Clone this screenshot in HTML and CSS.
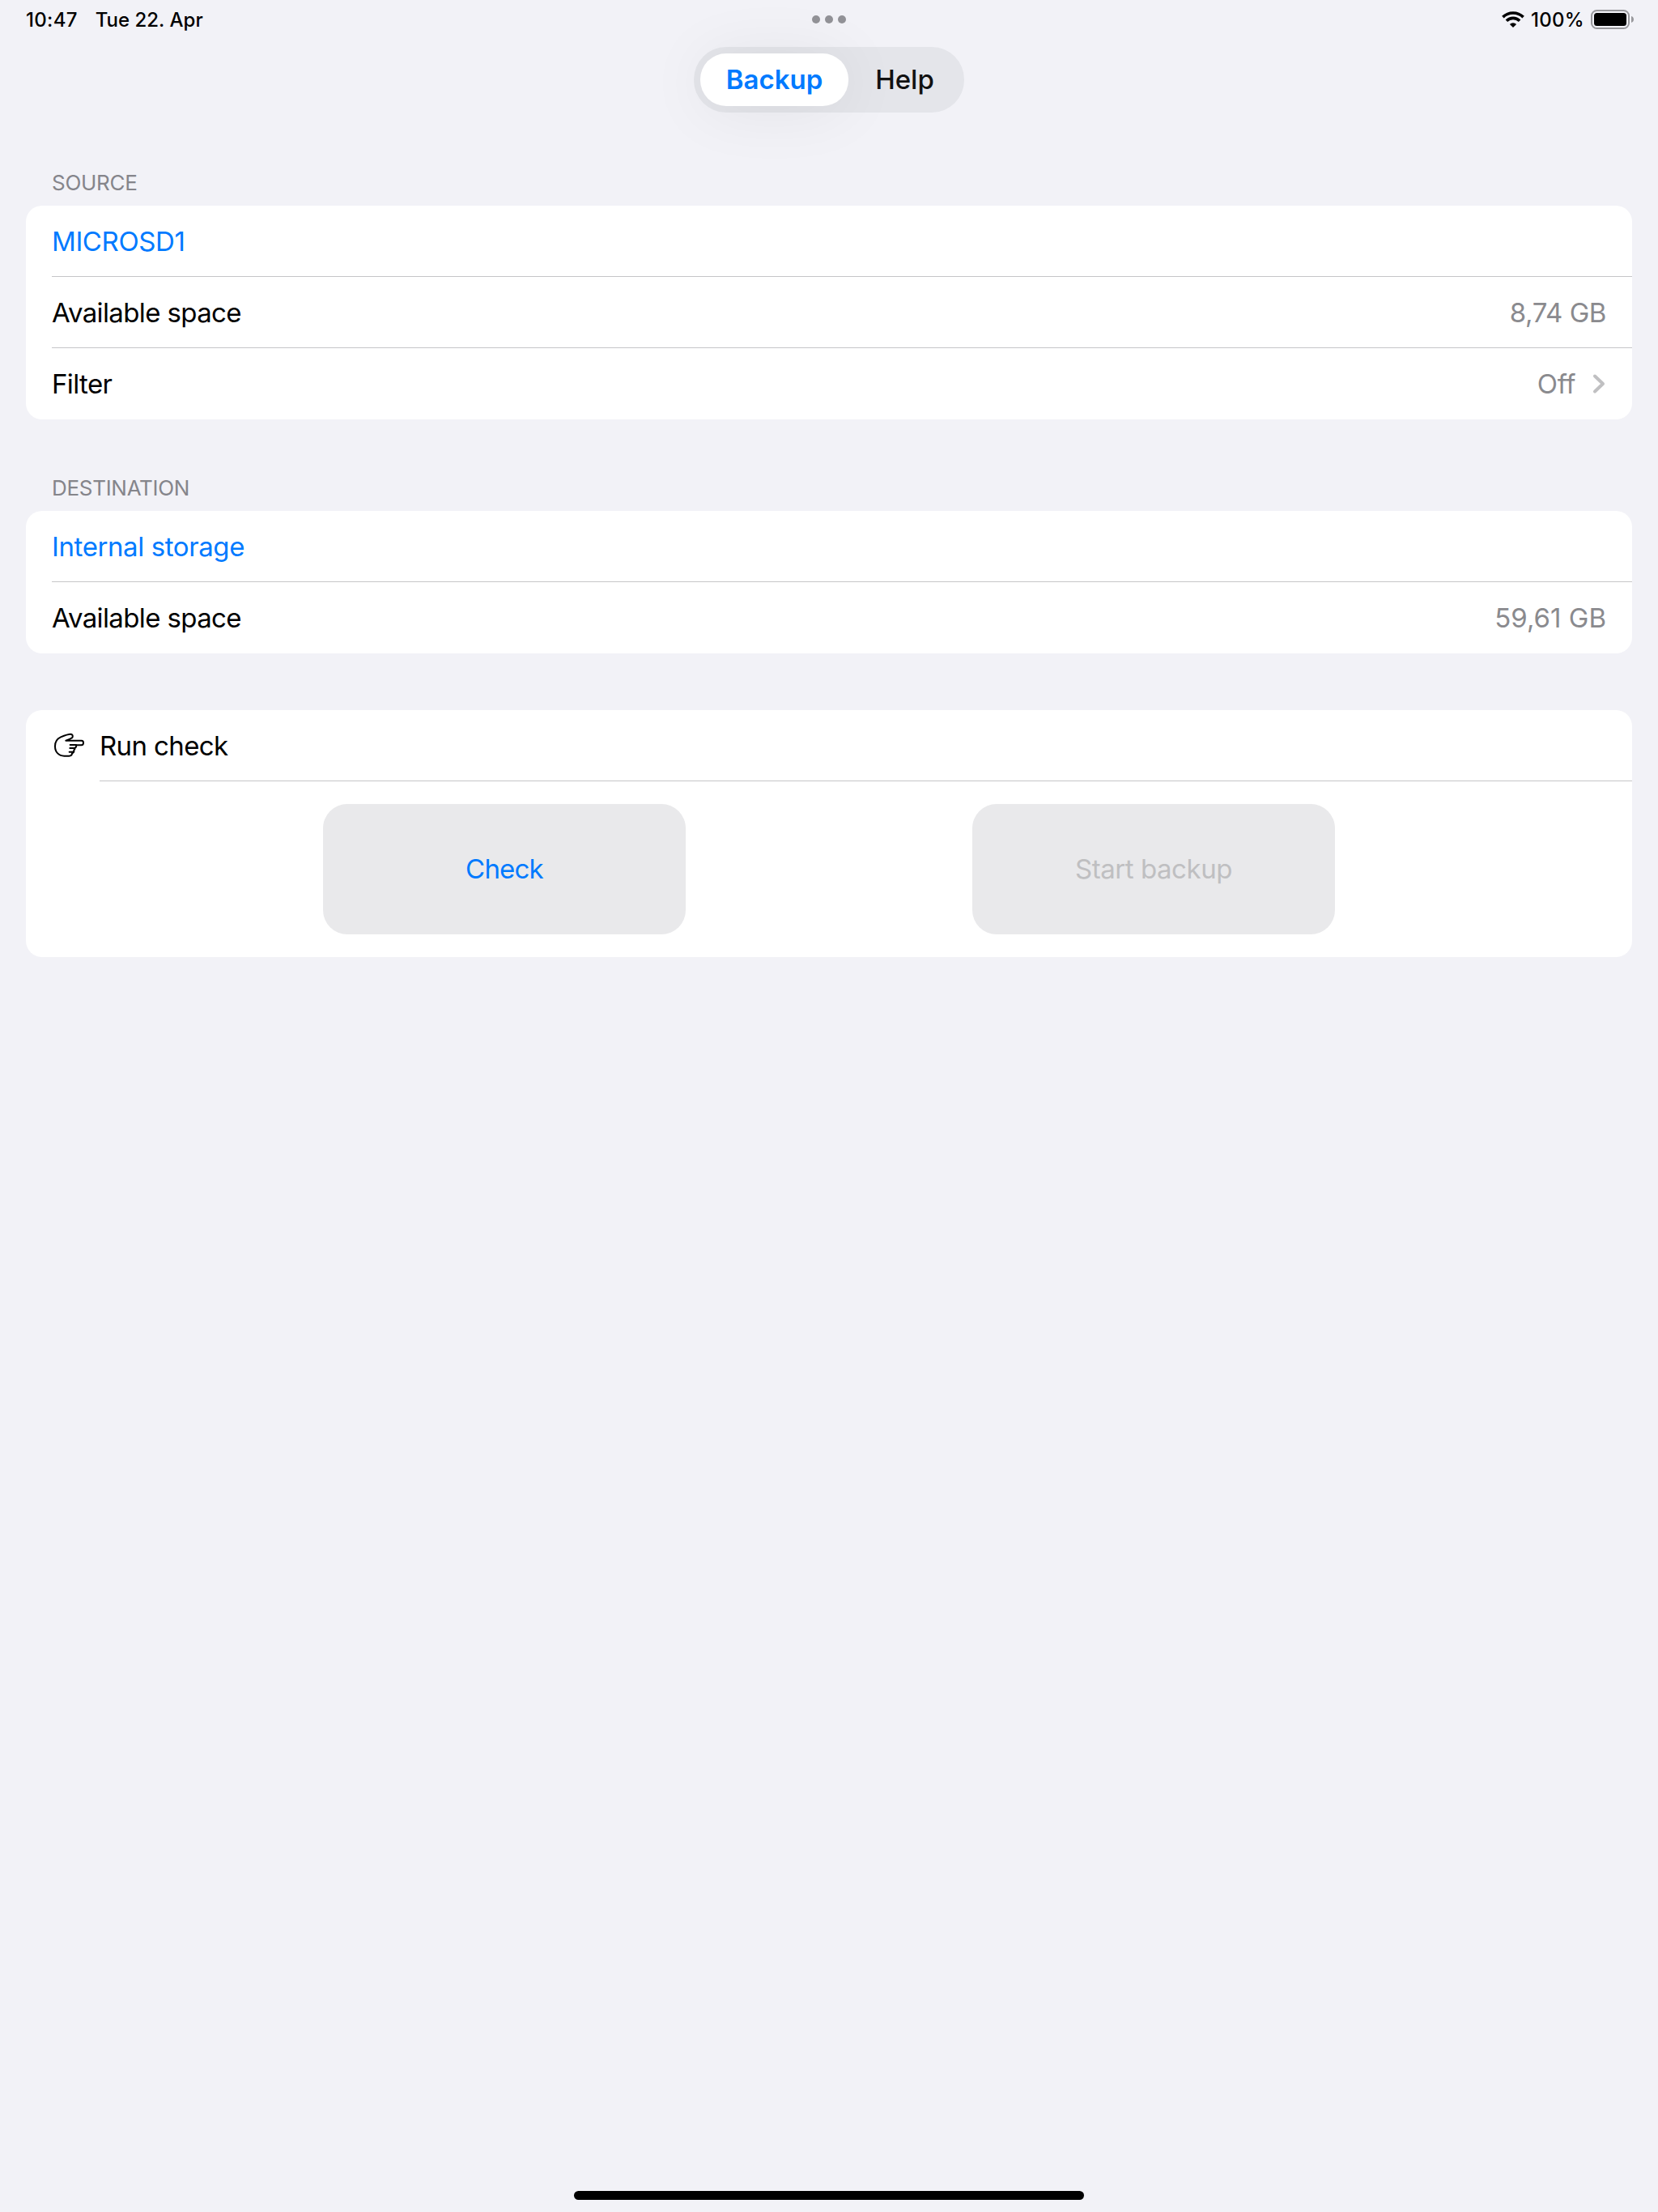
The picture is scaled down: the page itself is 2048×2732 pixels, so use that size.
FILE: index.html
```html
<!DOCTYPE html>
<html lang="en">

<head>
    <meta charset="UTF-8">
    <meta name="viewport" content="width=device-width, initial-scale=1.0">
    <title>Backup</title>
    <link rel="stylesheet" href="styles.css">
</head>

<body>
    <header class="status">
        <div class="status-left">
            <span class="time">10:47</span>
            <span class="date">Tue 22. Apr</span>
        </div>
        <div class="dots">
            <i></i><i></i><i></i>
        </div>
        <div class="status-right">
            <svg class="wifi" width="28" height="20" viewBox="0 0 28 20">
                <g fill="none" stroke="#000" stroke-width="3.6">
                    <path d="M1.4 7.1a18 18 0 0 1 25.2 0"></path>
                    <path d="M5.9 11.7a11.6 11.6 0 0 1 16.2 0"></path>
                </g>
                <path d="M14 20l-4.1-4.1a5.8 5.8 0 0 1 8.2 0z"></path>
            </svg>
            <span class="percent">100%</span>
            <svg class="battery" width="53" height="24" viewBox="0 0 53 24">
                <rect x="1" y="1" width="46" height="22" rx="6.5" fill="none" stroke="#98989c" stroke-width="2"></rect>
                <rect x="4" y="4" width="40" height="16" rx="3.5"></rect>
                <path d="M50 8c2 .6 3 2.200 3 4s-1 3.400-3 4z" fill="#98989c"></path>
            </svg>
        </div>
    </header>

    <nav class="tabs">
        <a class="tab active">Backup</a>
        <a class="tab">Help</a>
    </nav>

    <main>
        <h2 class="title">SOURCE</h2>
        <ul class="card">
            <li class="row"><span class="link">MICROSD1</span></li>
            <li class="row">
                <span class="label">Available space</span>
                <span class="value">8,74 GB</span>
            </li>
            <li class="row">
                <span class="label">Filter</span>
                <span class="value off">Off</span>
                <svg class="arrow" width="18" height="28" viewBox="0 0 18 28">
                    <path d="M4 4.500l10 9.500l-10 9.500" fill="none" stroke="#c0c0c2" stroke-width="4" stroke-linecap="round" stroke-linejoin="round"></path>
                </svg>
            </li>
        </ul>

        <h2 class="title">DESTINATION</h2>
        <ul class="card">
            <li class="row"><span class="link">Internal storage</span></li>
            <li class="row">
                <span class="label">Available space</span>
                <span class="value wide">59,61 GB</span>
            </li>
        </ul>

        <div class="card">
            <div class="row run">
                <svg class="hand" width="39" height="31" viewBox="138 136 117 93">
                    <g fill="none" stroke="#000" stroke-width="6" stroke-linecap="round" stroke-linejoin="round">
                        <path d="M217 193c5-2 6-6 6-11h19c4 0 7-4 7-9s-3-8-7-8h-58c10-3 18-6 23-10c4-4 3-11-2-13c-6-2-25 4-40 10c-14 6-21 18-21 34c0 22 14 36 34 36h18c8 0 11-4 11-10c5-2 8-7 7-12c3-2 4-5 3-7z"></path>
                        <path d="M200 181h22M199 193h18M197 207h15"></path>
                    </g>
                </svg>
                <span class="label">Run check</span>
            </div>
            <div class="buttons">
                <button class="btn check">Check</button>
                <button class="btn start" disabled>Start backup</button>
            </div>
        </div>
    </main>

    <div class="home"></div>
</body>

</html>
```
FILE: styles.css
```css
* {
    margin: 0;
    padding: 0;
    box-sizing: border-box;
}

body {
    display: flex;
    flex-direction: column;
    height: 2732px;
    background-color: #f2f2f7;
    color: #000;
    font-family: Inter, "Liberation Sans", sans-serif;
    font-size: 33px;
}

li {
    list-style: none;
}

svg {
    display: block;
    flex: none;
}

/* status bar */
.status {
    display: grid;
    grid-template-columns: 1fr auto 1fr;
    align-items: center;
    height: 48px;
    padding: 0 30px 0 32px;
    font-size: 24px;
    font-weight: 500;
    line-height: 47px;
}

.status-left {
    display: flex;
    gap: 22px;
}

.time {
    letter-spacing: .3px;
}

.status-right {
    display: flex;
    align-items: center;
    justify-content: flex-end;
}

.dots {
    display: flex;
    gap: 6px;
    margin-left: -2px;
}

.dots i {
    width: 10px;
    height: 10px;
    border-radius: 50%;
    background-color: #929297;
}

.percent {
    margin: 0 8px 0 8px;
    letter-spacing: .3px;
}

/* tab switch */
.tabs {
    display: flex;
    width: 334px;
    height: 81px;
    margin: 10px auto 0;
    padding: 8px 4px 8px 8px;
    border-radius: 40px;
    background-color: #e4e5ea;
}

.tab {
    width: 139px;
    border-radius: 32px;
    color: #111;
    font-weight: 500;
    line-height: 64px;
    text-align: center;
}

.active {
    width: 183px;
    background-color: #fff;
    box-shadow: 0 4px 80px rgba(0, 0, 0, .07);
    color: #007aff;
    font-weight: 600;
}

/* lists */
main {
    padding: 71px 32px 0;
}

.title {
    margin: 0 0 12px 32px;
    color: #85858b;
    font-size: 26px;
    font-weight: 400;
    line-height: 32px;
    letter-spacing: -.3px;
}

.card {
    border-radius: 20px;
    background-color: #fff;
}

.card + .title {
    margin-top: 69px;
}

.card + .card {
    margin-top: 70px;
}

.row {
    display: flex;
    align-items: center;
    height: 88px;
    margin-left: 32px;
    padding-right: 32px;
    border-bottom: 1px solid #c6c6c8;
}

.row:last-child {
    border-bottom: 0;
}

.link {
    color: #007aff;
    letter-spacing: -.4px;
}

.label {
    letter-spacing: -.62px;
}

.value {
    margin-left: auto;
    color: #8a8a8e;
    letter-spacing: -.45px;
}

.wide {
    letter-spacing: 0;
}

.off {
    letter-spacing: -.4px;
}

.arrow {
    margin-left: 20px;
}

/* the line starts under the text, not under the hand */
.run {
    margin-left: 91px;
}

.hand {
    margin: 0 18px 0 -57px;
}

.buttons {
    display: flex;
    justify-content: space-between;
    padding: 28px 367px;
}

.btn {
    width: 448px;
    height: 161px;
    padding-bottom: 2px;
    border: 0;
    border-radius: 30px;
    background-color: #e9e9eb;
    color: #007aff;
    font: inherit;
    letter-spacing: -.45px;
}

.check {
    letter-spacing: -.8px;
}

.btn:disabled {
    color: #bfbfc1;
}

.home {
    width: 630px;
    height: 11px;
    margin: auto auto 15px;
    border-radius: 6px;
    background-color: #000;
}
```
